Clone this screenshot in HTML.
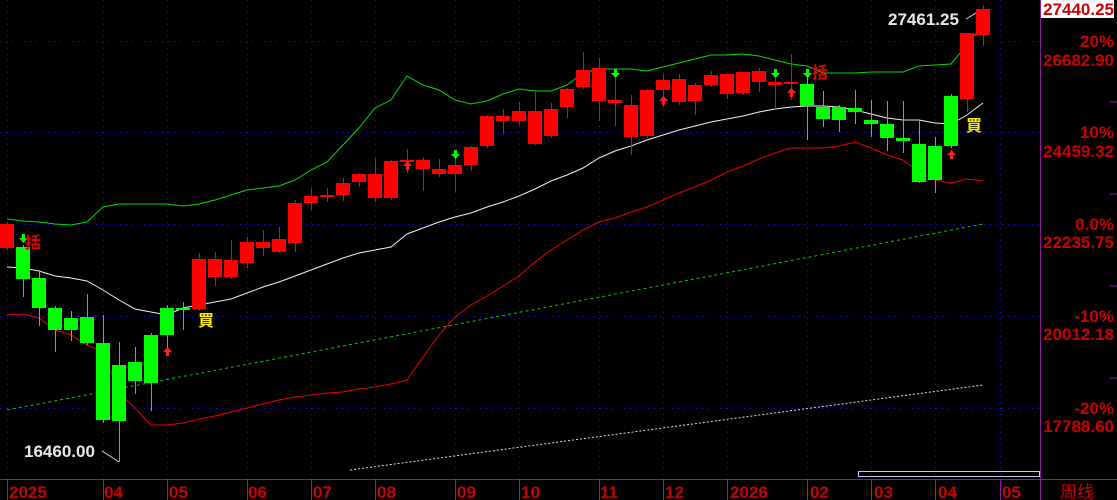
<!DOCTYPE html>
<html><head><meta charset="utf-8"><style>
html,body{margin:0;padding:0;background:#000;width:1117px;height:500px;overflow:hidden}
svg{position:absolute;left:0;top:0}
.ax{font-family:"Liberation Sans","Noto Sans CJK SC",sans-serif;font-weight:bold;font-size:17px;fill:#cc0000}
.lb{font-family:"Liberation Sans",sans-serif;font-weight:bold;font-size:17px;fill:#e8e8e8}
</style></head><body>
<svg id="s" width="1117" height="500" xmlns="http://www.w3.org/2000/svg">
<g id="grid" stroke="#1a1acc" stroke-width="1" stroke-dasharray="1,5"></g>
<g id="lines" fill="none"></g>
<g id="c"></g>
<line x1="1040.5" y1="0" x2="1040.5" y2="500" stroke="#8a1a9a"/>
<line x1="0" y1="479.5" x2="1117" y2="479.5" stroke="#8a1a9a"/>
<rect x="858.5" y="471.5" width="181" height="5" fill="none" stroke="#c8c8ff"/>
<rect x="1041" y="0" width="73" height="18" fill="#fff"/>
<text class="ax" x="1114" y="15" text-anchor="end">27440.25</text>
<text class="ax" x="1114" y="47" text-anchor="end">20%</text>
<text class="ax" x="1114" y="66" text-anchor="end">26682.90</text>
<text class="ax" x="1114" y="138" text-anchor="end">10%</text>
<text class="ax" x="1114" y="157" text-anchor="end">24459.32</text>
<text class="ax" x="1114" y="230" text-anchor="end">0.0%</text>
<text class="ax" x="1114" y="248" text-anchor="end">22235.75</text>
<text class="ax" x="1114" y="322" text-anchor="end">-10%</text>
<text class="ax" x="1114" y="340" text-anchor="end">20012.18</text>
<text class="ax" x="1114" y="414" text-anchor="end">-20%</text>
<text class="ax" x="1114" y="432" text-anchor="end">17788.60</text>
<g class="ax">
<text x="9" y="498">2025</text><text x="104" y="498">04</text><text x="169" y="498">05</text>
<text x="248" y="498">06</text><text x="313" y="498">07</text><text x="377" y="498">08</text>
<text x="457" y="498">09</text><text x="521" y="498">10</text><text x="600" y="498">11</text>
<text x="665" y="498">12</text><text x="730" y="498">2026</text><text x="810" y="498">02</text>
<text x="874" y="498">03</text><text x="938" y="498">04</text><text x="1002" y="498">05</text>
<text x="1060" y="498" style="font-weight:normal">周线</text>
</g>
<text class="lb" x="24" y="457">16460.00</text>
<polyline points="102,451 119,462" stroke="#ddd" fill="none"/>
<text class="lb" x="888" y="25">27461.25</text>
<polyline points="966,19 976,13" stroke="#ddd" fill="none"/>
<g font-family="'Noto Sans CJK SC',sans-serif" font-size="16" font-weight="bold">
<text x="25" y="248" fill="#e00000">括</text>
<text x="812" y="78" fill="#e00000">括</text>
<text x="198" y="326" fill="#ffee00">買</text>
<text x="966" y="131" fill="#ffee00">買</text>
</g>
</svg>
<script>
var s=document.getElementById('s'),NS='http://www.w3.org/2000/svg';
function el(p,t,a){var e=document.createElementNS(NS,t);for(var k in a)e.setAttribute(k,a[k]);p.appendChild(e);return e}
var g=document.getElementById('grid');
[41,132,224,316,408].forEach(function(y){el(g,'line',{x1:0,y1:y+.5,x2:1040,y2:y+.5})});
[7,103,167,247,311,375,455,519,599,663,727,807,871,935,1000].forEach(function(x){el(g,'line',{x1:x+.5,y1:0,x2:x+.5,y2:479});el(s,'line',{x1:x+.5,y1:480,x2:x+.5,y2:500,stroke:'#8a1a9a'})});
[132,224,316,408].forEach(function(y){el(s,'line',{x1:1110,y1:y-30,x2:1117,y2:y-30,stroke:'#8a1a9a'})});
var C=[[1,224,248,222,250],[0,247,279,245,297],[0,278,308,270,326],[0,308,330,306,352],[0,318,330,311,341],[0,317,343,294,345],[0,343,420,315,423],[0,365,421,342,462],[0,362,381,347,394],[0,335,383,333,411],[0,308,335,305,354],[0,308,310,302,330],
[1,259,309,253,311],[1,259,277,252,286],[1,260,277,240,279],[1,242,263,237,268],[1,242,248,230,256],[1,239,252,227,253],[1,203,243,200,252],[1,196,203,188,210],[1,195,196,188,202],[1,183,195,178,201],[1,174,182,173,187],[1,174,198,158,202],[1,161,198,160,200],[1,160,161,149,173],[1,160,169,157,191],[1,169,174,159,177],[1,165,174,151,192],[1,147,165,146,171],[1,116,146,115,148],[1,116,121,109,134],[1,111,121,102,125],[1,111,144,91,145],[1,109,136,103,138],[1,89,107,88,118],[1,70,87,52,89],[1,68,101,58,121],[1,100,103,72,126],[1,105,137,95,155],[1,90,136,89,138],[1,80,90,74,107],[1,79,102,74,105],[1,85,101,83,115],[1,75,85,71,87],[1,74,94,74,99],[1,72,93,72,95],[1,71,82,68,92],[1,82,85,72,109],[1,82,84,54,100],
[0,84,106,70,140],[0,107,119,91,127],[0,107,120,105,132],[0,108,112,90,124],[0,120,124,100,137],[0,124,138,101,151],[0,138,141,101,153],[0,144,182,120,183],[0,146,180,137,193],[0,96,146,94,148],
[1,33,99,33,112],[1,9,35,5,46]];
var cg=document.getElementById('c');
C.forEach(function(d,i){var x=7+16*i,col=d[0]?'#ff0000':'#00ff00';
el(cg,'line',{x1:x+.5,y1:d[3],x2:x+.5,y2:d[4],stroke:col,'stroke-width':1});
el(cg,'rect',{x:x-7,y:d[1],width:14,height:Math.max(2,d[2]-d[1]),fill:col});});
var L=document.getElementById('lines');
function pl(a,col,dash){var p=a.map(function(v){return v[0]+','+v[1]}).join(' ');var o={points:p,stroke:col,'stroke-width':1};if(dash)o['stroke-dasharray']=dash;el(L,'polyline',o)}
function xs(ys){return ys.map(function(y,i){return [7+16*i,y]})}
pl(xs([219,221,222,224,225,222,207,204,204,204,204,206,204,200,195,190,188,186,180,170,162,145,128,108,100,76,85,90,100,104,101,94,89,91,91,85,73,69,69,69,71,67,63,59,55,55,54,56,60,64,66,73,73,73,72,72,72,66,65,64,45,25]),'#00dd00');
pl(xs([267,268,271,276,278,281,290,300,309,312,315,308,305,302,299,293,287,282,276,270,264,258,253,250,247,234,228,222,217,213,207,202,196,189,181,175,168,158,151,146,140,135,130,126,122,119,116,112,109,107,106,106,107,110,114,118,120,120,123,124,115,103]),'#f0f0f0');
pl(xs([315,314,318,330,335,345,352,393,408,425,425,423,419,416,412,408,404,400,397,395,393,392,389,387,384,380,357,335,317,305,296,286,276,262,250,240,230,222,218,212,207,200,193,187,180,172,166,159,153,148,148,148,146,142,148,155,160,172,180,183,179,181]),'#ee0000');
pl([[7,410],[983,224]],'#00cc00','3,3');
pl([[350,470],[983,385]],'#e0e0e0','2,2');
function arr(x,y,col,down){var d=down?'M'+(x-1)+','+(y-8)+'h3v4h3l-4.5,5l-4.5,-5h3z':'M'+(x-1)+','+(y+8)+'h3v-4h3l-4.5,-5l-4.5,5h3z';el(cg,'path',{d:d,fill:col})}
arr(23,242,'#00ff00',1);arr(615,77,'#00ff00',1);arr(455,158,'#00ff00',1);arr(775,77,'#00ff00',1);arr(807,77,'#00ff00',1);
arr(167,348,'#ff2020',0);arr(407,162,'#ff2020',0);arr(663,97,'#ff2020',0);arr(791,89,'#ff2020',0);arr(951,151,'#ff2020',0);
</script>
</body></html>
